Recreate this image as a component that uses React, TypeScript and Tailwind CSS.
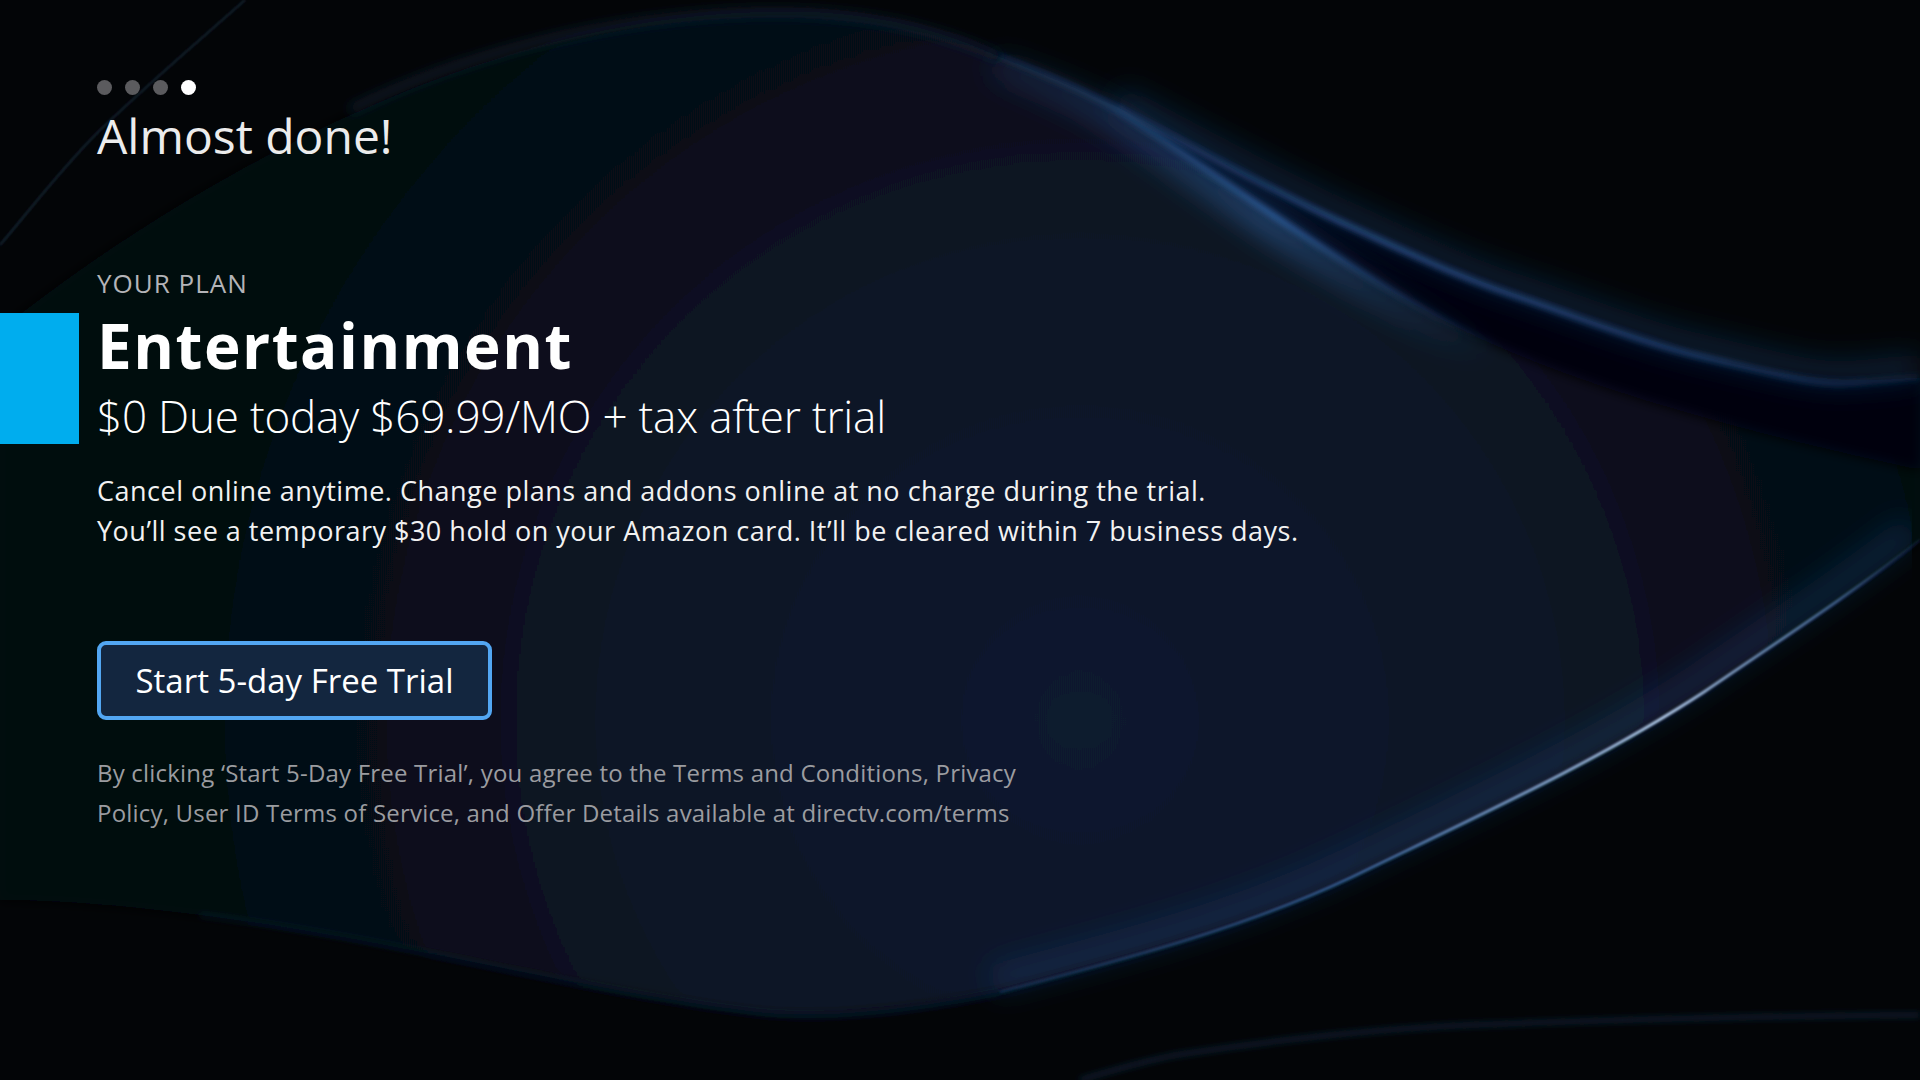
import React from "react";

// decorative wave backdrop, coordinates are in a 1920x1080 canvas
function Backdrop() {
  const frontEdge = "M1000,57 C1060,80 1100,100 1117,110 C1180,150 1235,193 1352,267 C1420,310 1460,330 1499,347";
  const backEdge = "M1117,107 C1200,150 1280,195 1352,227 C1420,258 1470,282 1528,300 C1600,325 1650,345 1704,357 C1780,375 1820,386 1851,383 C1880,381 1900,378 1920,377";
  const lowEdge = "M1000,992 C1120,960 1240,930 1352,877 C1480,815 1600,760 1704,692 C1780,640 1850,595 1920,540";

  return (
    <svg
      className="absolute inset-0 w-full h-full"
      viewBox="0 0 1920 1080"
      preserveAspectRatio="none"
    >
      <defs>
        <filter id="b3" filterUnits="userSpaceOnUse" x="0" y="0" width="1920" height="1080">
          <feGaussianBlur stdDeviation="3" />
        </filter>
        <filter id="b6" filterUnits="userSpaceOnUse" x="0" y="0" width="1920" height="1080">
          <feGaussianBlur stdDeviation="6" />
        </filter>
        <filter id="b14" filterUnits="userSpaceOnUse" x="0" y="0" width="1920" height="1080">
          <feGaussianBlur stdDeviation="14" />
        </filter>
        <filter id="b1" filterUnits="userSpaceOnUse" x="0" y="0" width="1920" height="1080">
          <feGaussianBlur stdDeviation="1.2" />
        </filter>
        <radialGradient id="sheet" gradientUnits="userSpaceOnUse" cx="1080" cy="720" r="950">
          <stop offset="0" stopColor="#0c1a2f" />
          <stop offset="0.5" stopColor="#091425" />
          <stop offset="0.8" stopColor="#060c16" />
          <stop offset="1" stopColor="#05080d" />
        </radialGradient>
        <linearGradient id="lowRim" gradientUnits="userSpaceOnUse" x1="1000" y1="990" x2="1920" y2="540">
          <stop offset="0" stopColor="#1c3b66" stopOpacity="0.5" />
          <stop offset="0.35" stopColor="#3c6aa6" stopOpacity="0.8" />
          <stop offset="0.7" stopColor="#b9d2f2" stopOpacity="0.95" />
          <stop offset="0.9" stopColor="#5d8ac4" stopOpacity="0.6" />
          <stop offset="1" stopColor="#2a4e80" stopOpacity="0.2" />
        </linearGradient>
        <linearGradient id="backRim" gradientUnits="userSpaceOnUse" x1="1117" y1="107" x2="1920" y2="377">
          <stop offset="0" stopColor="#2a5896" stopOpacity="0.4" />
          <stop offset="0.3" stopColor="#3168ad" stopOpacity="0.95" />
          <stop offset="0.75" stopColor="#2c5c9c" stopOpacity="0.8" />
          <stop offset="1" stopColor="#1d3d68" stopOpacity="0.5" />
        </linearGradient>
        <linearGradient id="frontRim" gradientUnits="userSpaceOnUse" x1="1000" y1="57" x2="1499" y2="347">
          <stop offset="0" stopColor="#1f3e66" stopOpacity="0.6" />
          <stop offset="0.55" stopColor="#3065a8" stopOpacity="1" />
          <stop offset="1" stopColor="#2a5a98" stopOpacity="0" />
        </linearGradient>
      </defs>

      {/* lit sheet between the top hill and the lower sweep */}
      <path
        d="M0,330 C150,210 450,20 760,12 C880,8 950,35 1000,57 C1060,80 1100,100 1117,107 C1200,150 1280,195 1352,227 C1470,282 1600,325 1704,357 C1820,386 1880,381 1920,377 L1920,540 C1850,595 1780,640 1704,692 C1600,760 1480,815 1352,877 C1240,930 1120,960 1000,992 C900,1012 820,1018 765,1013 C600,995 400,940 200,915 C120,905 50,900 0,900 Z"
        fill="url(#sheet)"
        filter="url(#b6)"
      />

      {/* dark crease between the two folds */}
      <path
        d="M1117,107 C1200,150 1280,195 1352,227 C1470,282 1600,325 1704,357 C1820,386 1880,381 1920,377 L1920,470 C1780,440 1620,400 1499,347 C1460,330 1420,310 1352,267 C1235,193 1180,150 1117,110 Z"
        fill="#03060a"
        filter="url(#b6)"
      />

      {/* rims */}
      <path d={backEdge} transform="translate(0,-10)" stroke="#214a80" strokeOpacity="0.35" strokeWidth="26" fill="none" filter="url(#b14)" />
      <path d={backEdge} stroke="url(#backRim)" strokeWidth="4" fill="none" filter="url(#b3)" />
      <path d={frontEdge} transform="translate(-6,8)" stroke="url(#frontRim)" strokeWidth="22" strokeOpacity="0.7" fill="none" filter="url(#b14)" />
      <path d={frontEdge} stroke="url(#frontRim)" strokeWidth="5" fill="none" filter="url(#b3)" />
      <path
        d="M350,110 C450,60 600,15 760,12 C880,10 950,35 1000,57"
        stroke="#1e3048"
        strokeOpacity="0.7"
        strokeWidth="6"
        fill="none"
        filter="url(#b6)"
      />

      {/* lower sweep */}
      <path d={lowEdge} transform="translate(-8,-12)" stroke="#244a7e" strokeOpacity="0.3" strokeWidth="30" fill="none" filter="url(#b14)" />
      <path d={lowEdge} stroke="url(#lowRim)" strokeWidth="3" fill="none" filter="url(#b1)" />
      <path
        d="M200,915 C400,940 600,995 765,1013 C850,1020 920,1010 1000,992"
        stroke="#16304f"
        strokeOpacity="0.5"
        strokeWidth="3"
        fill="none"
        filter="url(#b3)"
      />

      {/* faint bottom sweep */}
      <path
        d="M1080,1080 C1120,1068 1150,1060 1176,1055 C1300,1036 1400,1028 1469,1025 C1650,1018 1800,1016 1920,1015"
        stroke="#1d3556"
        strokeOpacity="0.8"
        strokeWidth="3"
        fill="none"
        filter="url(#b3)"
      />

      {/* faint top-left streak */}
      <path
        d="M245,0 C200,40 160,73 100,130 C60,170 30,210 0,245"
        stroke="#1d2a3b"
        strokeOpacity="0.8"
        strokeWidth="2"
        fill="none"
        filter="url(#b1)"
      />
    </svg>
  );
}

function StepDots() {
  return (
    <div className="flex items-center gap-[13px] h-[15px]">
      <span className="w-[15px] h-[15px] rounded-full bg-[#5b5b5e]" />
      <span className="w-[15px] h-[15px] rounded-full bg-[#5b5b5e]" />
      <span className="w-[15px] h-[15px] rounded-full bg-[#5b5b5e]" />
      <span className="w-[15px] h-[15px] rounded-full bg-white" />
    </div>
  );
}

export default function App() {
  return (
    <div
      className="relative w-[1920px] h-[1080px] overflow-hidden bg-[#030507] text-white"
      style={{ fontFamily: '"Open Sans", "Noto Sans", sans-serif' }}
    >
      <Backdrop />

      <div className="relative flex flex-col pt-[80px]">
        <div className="pl-[97px]">
          <StepDots />
          <h1 className="mt-[13px] text-[48px] leading-[56px] font-normal text-[#ececec]">
            Almost done!
          </h1>
        </div>

        <div className="mt-[104px] pl-[97px] text-[26px] leading-[30px] font-medium tracking-[1px] text-[#b4b4b8] uppercase">
          Your plan
        </div>

        {/* Highlighted plan */}
        <div className="mt-[15px] flex">
          <div className="w-[79px] bg-[#00adee]" />
          <div className="pl-[18px] flex flex-col">
            <h2 className="text-[62px] leading-[64px] font-bold tracking-[1.5px] text-white">
              Entertainment
            </h2>
            <p className="mt-[11px] text-[44px] leading-[56px] font-light tracking-[-0.2px] text-white">
              $0 Due today $69.99/MO + tax after trial
            </p>
          </div>
        </div>

        <div className="pl-[97px] mt-[27px] text-[27px] leading-[40px] tracking-[0.5px] text-[#f2f2f2]">
          <p>Cancel online anytime. Change plans and addons online at no charge during the trial.</p>
          <p>You’ll see a temporary $30 hold on your Amazon card. It’ll be cleared within 7 business days.</p>
        </div>

        <div className="pl-[97px] mt-[90px]">
          <button className="w-[395px] h-[79px] rounded-[9px] border-[4px] border-[#52a6f2] bg-[#13263f] text-[33px] font-medium text-white">
            Start 5-day Free Trial
          </button>
        </div>

        <p className="pl-[97px] mt-[33px] w-[1060px] text-[24px] leading-[40px] tracking-[0.2px] text-[#9b9ca0]">
          By clicking ‘Start 5-Day Free Trial’, you agree to the Terms and Conditions, Privacy
          Policy, User ID Terms of Service, and Offer Details available at directv.com/terms
        </p>
      </div>
    </div>
  );
}
